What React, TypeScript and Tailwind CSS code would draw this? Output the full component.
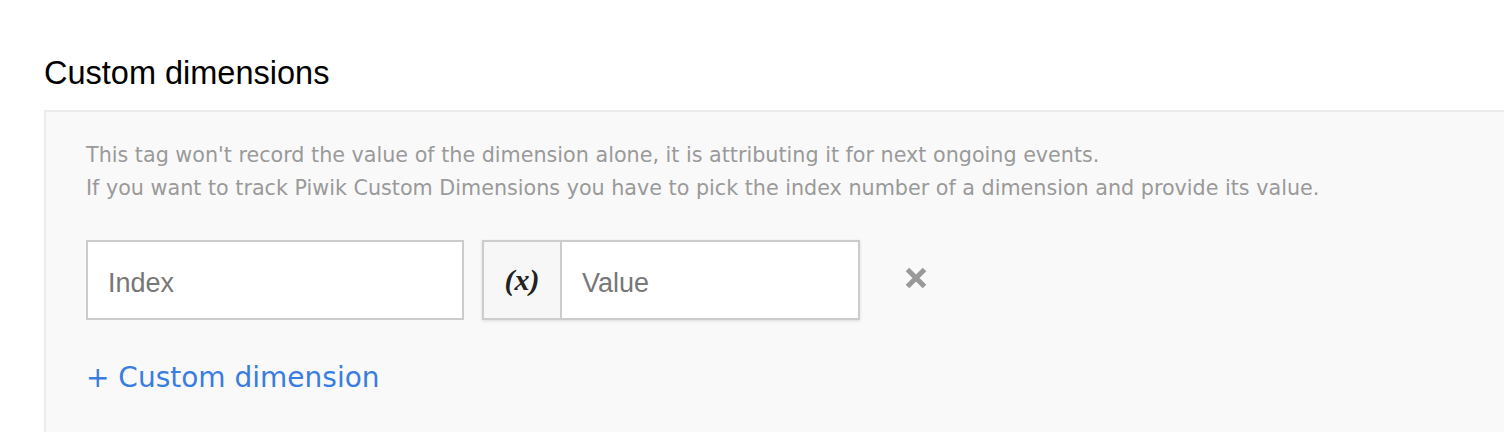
import React from "react";

function RemoveIcon() {
  return (
    <svg width="24" height="24" viewBox="0 0 24 24" aria-hidden="true">
      <path
        d="M3.5 3.5 L20.5 20.5 M20.5 3.5 L3.5 20.5"
        stroke="#999999"
        strokeWidth="5"
        strokeLinecap="butt"
        fill="none"
      />
    </svg>
  );
}

function DimensionRow() {
  return (
    <div className="flex items-center">
      <input
        className="w-[378px] h-[80px] border-2 border-[#cccccc] bg-white pl-5 pt-[6px] text-[27px] text-[#333] placeholder:text-[#777] outline-none font-['Liberation_Sans',Arial,sans-serif]"
        placeholder="Index"
      />

      <div className="ml-[18px] flex w-[378px] h-[80px] border-2 border-[#cccccc] bg-white shadow-[0_1px_3px_rgba(0,0,0,0.12)]">
        <div className="w-[78px] shrink-0 flex items-center justify-center bg-[#f7f7f7] border-r-2 border-[#cccccc]">
          <span className="text-[30px] leading-none font-bold italic text-[#222] font-['Liberation_Serif','Times_New_Roman',serif]">
            (x)
          </span>
        </div>
        <input
          className="flex-1 min-w-0 bg-white pl-5 pt-[6px] text-[27px] text-[#333] placeholder:text-[#777] outline-none font-['Liberation_Sans',Arial,sans-serif]"
          placeholder="Value"
        />
      </div>

      <button className="ml-[44px] -mt-[4px] flex items-center justify-center">
        <RemoveIcon />
      </button>
    </div>
  );
}

export default function App() {
  return (
    <div className="w-full h-[432px] overflow-hidden bg-white pl-[44px] font-['Liberation_Sans',Arial,sans-serif]">
      <h2 className="mt-[53px] mb-[17px] text-[32.5px] leading-[40px] text-black font-normal">
        Custom dimensions
      </h2>

      <div className="-mr-[20px] border-l-2 border-t-2 border-[#ececec] bg-[#f9f9f9] pl-[40px] pt-[27px] pb-[40px]">
        <div className="text-[20.7px] leading-[33px] text-[#9a9a9a] font-['DejaVu_Sans',Verdana,sans-serif]">
          <p>
            This tag won't record the value of the dimension alone, it is
            attributing it for next ongoing events.
          </p>
          <p>
            If you want to track Piwik Custom Dimensions you have to pick the
            index number of a dimension and provide its value.
          </p>
        </div>

        <div className="mt-[35px]">
          <DimensionRow />
        </div>

        <button className="mt-[40px] text-[28px] leading-[36px] text-[#3a7de0] font-['DejaVu_Sans',Verdana,sans-serif]">
          + Custom dimension
        </button>
      </div>
    </div>
  );
}
